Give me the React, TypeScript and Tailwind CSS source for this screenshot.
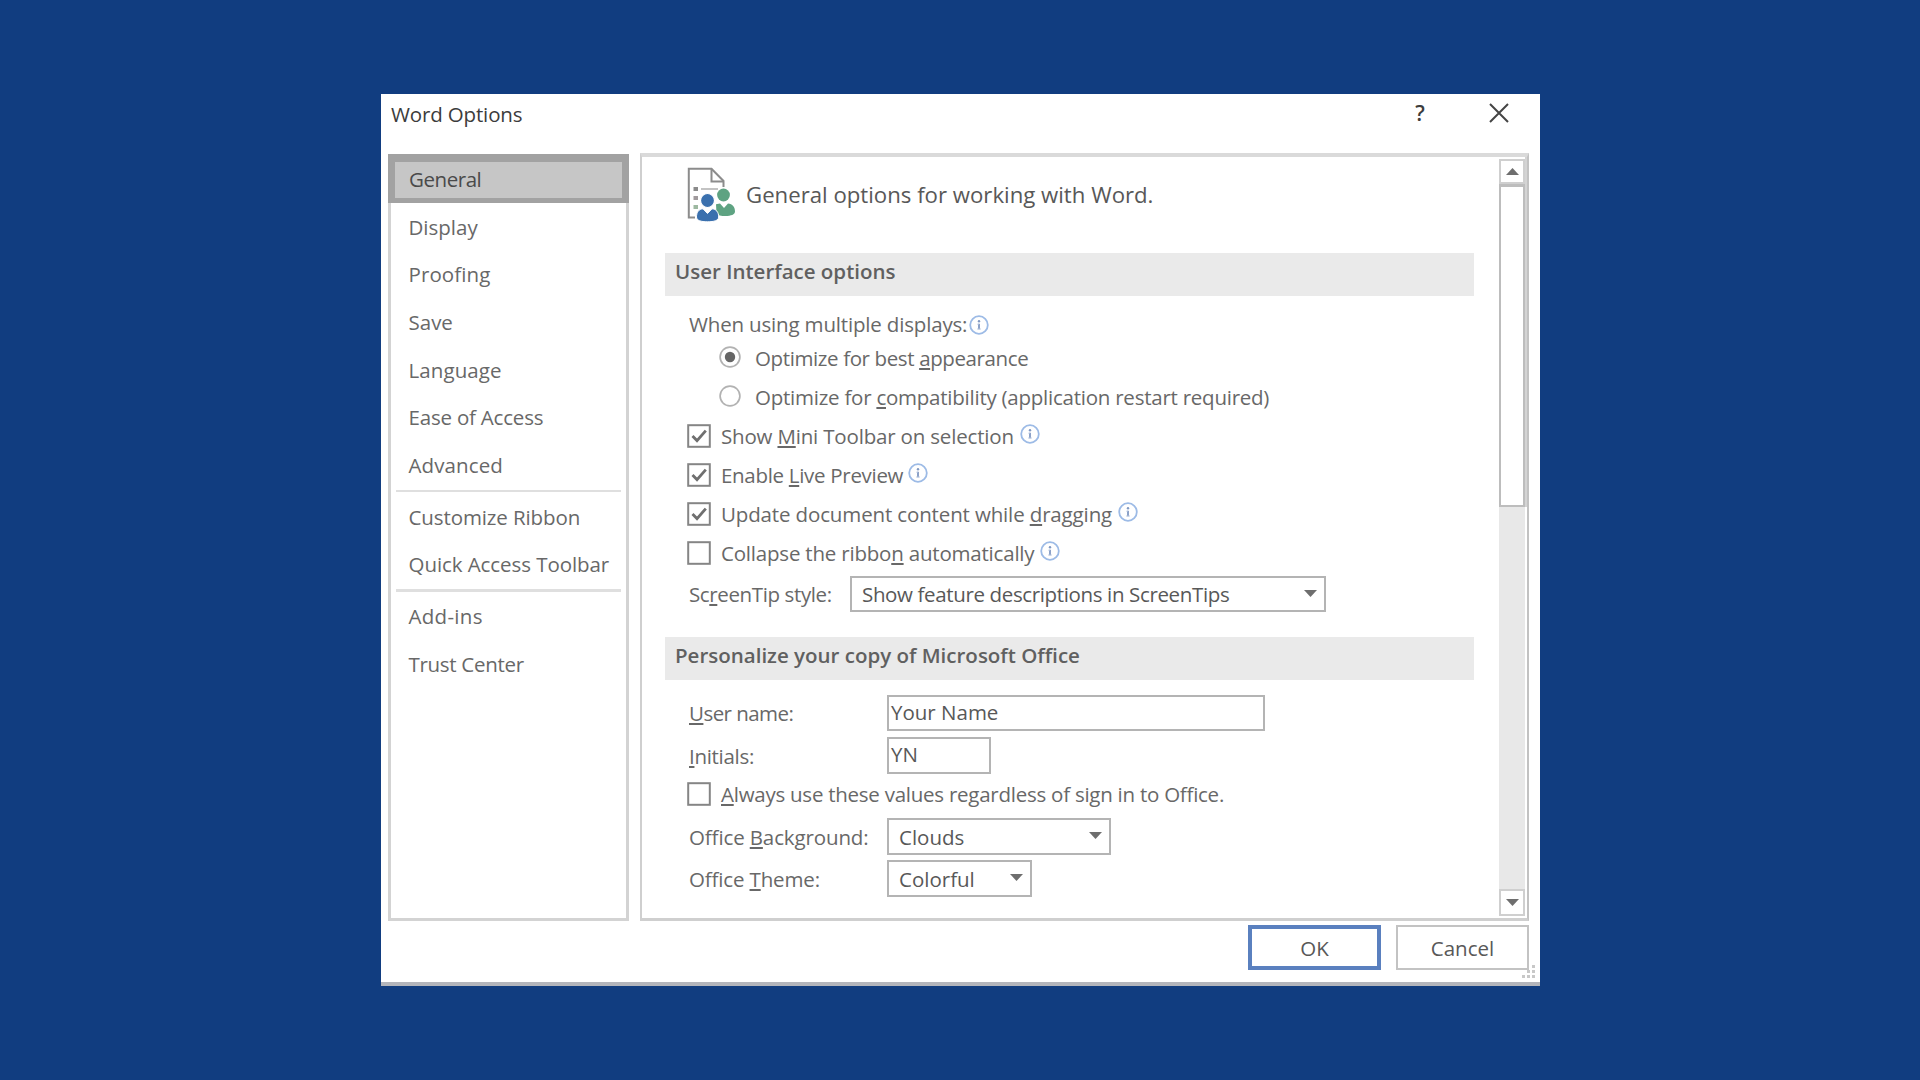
import clsx from 'clsx';

interface NavItem {
  label: string;
  cls?: string;
}

const NAV_GROUPS: NavItem[][] = [
  [
    { label: 'General', cls: 'tracking-[-0.45px]' },
    { label: 'Display' },
    { label: 'Proofing', cls: 'tracking-[0.1px]' },
    { label: 'Save' },
    { label: 'Language', cls: 'tracking-[0.1px]' },
    { label: 'Ease of Access', cls: 'tracking-[-0.2px]' },
    { label: 'Advanced', cls: 'tracking-[0.1px]' },
  ],
  [{ label: 'Customize Ribbon', cls: 'tracking-[-0.1px]' }, { label: 'Quick Access Toolbar', cls: 'tracking-[-0.07px]' }],
  [{ label: 'Add-ins', cls: 'tracking-[0.3px]' }, { label: 'Trust Center', cls: 'tracking-[-0.3px]' }],
];

const CHECKS = [
  { text: 'Show &Mini Toolbar on selection', checked: true, cls: 'tracking-[-0.18px]', gap: 'ml-[6px]' },
  { text: 'Enable &Live Preview', checked: true, cls: 'tracking-[-0.3px]', gap: 'ml-[5px]' },
  { text: 'Update document content while &dragging', checked: true, cls: 'tracking-[-0.14px]', gap: 'ml-[6px]' },
  { text: 'Collapse the ribbo&n automatically', checked: false, cls: 'tracking-[-0.2px]', gap: 'ml-[6px]' },
];

// "&" marks the accelerator key, the letter after it gets underlined
function Label({ text, className }: { text: string; className?: string }) {
  const at = text.indexOf('&');
  return (
    <span className={clsx('whitespace-nowrap', className)}>
      {at < 0 ? text : (
        <>
          {text.slice(0, at)}
          <u className="decoration-[1.5px] underline-offset-[2px]">{text[at + 1]}</u>
          {text.slice(at + 2)}
        </>
      )}
    </span>
  );
}

function Info({ className }: { className?: string }) {
  return (
    <svg viewBox="0 0 20 20" className={clsx('w-5 h-5 shrink-0', className)} fill="none">
      <circle cx="10" cy="10" r="8.8" stroke="#9dbbe6" strokeWidth="1.8" />
      <circle cx="10" cy="6.2" r="1.2" fill="#8098c2" />
      <path d="M10 8.8V14.2" stroke="#8098c2" strokeWidth="1.8" />
      <path d="M8.4 9.2H10M8.2 14H11.8" stroke="#b3c3de" strokeWidth="1" />
    </svg>
  );
}

function Checkbox({ checked }: { checked?: boolean }) {
  return (
    <svg viewBox="0 0 24 24" className="w-6 h-6 shrink-0" fill="none">
      <rect x="1.2" y="1.2" width="21.6" height="21.6" fill="#fff" stroke="#858585" strokeWidth="2" />
      {checked && <path d="M5.5 12L10 16.6L18.8 6.6" stroke="#6f6f6f" strokeWidth="2.8" />}
    </svg>
  );
}

function Radio({ checked }: { checked?: boolean }) {
  return (
    <svg viewBox="0 0 22 22" className="w-[22px] h-[22px] shrink-0 -mt-[2px]" fill="none">
      <circle cx="11" cy="11" r="9.9" fill="#fff" stroke="#b2b2b2" strokeWidth="1.7" />
      {checked && <circle cx="11" cy="11" r="5.2" fill="#666" />}
    </svg>
  );
}

function Arrow({ up, className }: { up?: boolean; className?: string }) {
  return (
    <svg viewBox="0 0 13 7" className={clsx('w-[13px] h-[7px] shrink-0', className)}>
      <path d={up ? 'M0 7L6.5 0L13 7Z' : 'M0 0H13L6.5 7Z'} fill="#6e6e6e" />
    </svg>
  );
}

function Select({ value, className, textCls }: { value: string; className: string; textCls?: string }) {
  return (
    <div className={clsx('flex items-center justify-between border-2 border-[#b4b4b4] bg-white pl-[10px] pr-[7px]', className)}>
      <Label text={value} className={clsx('text-[#585858]', textCls)} />
      <Arrow className="-mt-[2px]" />
    </div>
  );
}

function SectionHeader({ title, className }: { title: string; className?: string }) {
  return (
    <div className={clsx('ml-[22px] mr-[25px] flex h-[43px] items-center bg-[#eaeaea] pl-[10px] pb-[7px] font-semibold text-[#606060]', className)}>
      <Label text={title} />
    </div>
  );
}

function GeneralIcon() {
  return (
    <svg viewBox="0 0 50 56" className="w-[50px] h-14 shrink-0" fill="none">
      <path d="M8 50.5H1.8V1.8H24.5L36.5 14V20" stroke="#8c8c8c" strokeWidth="2" />
      <path d="M24.5 1.8V14.5H36" stroke="#8c8c8c" strokeWidth="2" />
      <path d="M14 22H31" stroke="#b5b5b5" strokeWidth="1.6" />
      <path d="M6.5 20H11V24H6.5Z" fill="#8a8a8a" />
      <path d="M6.5 29H11V33H6.5Z" fill="#a09a9c" />
      <path d="M6.5 38H11V42H6.5Z" fill="#9db8a0" />
      <circle cx="36.5" cy="28" r="6.4" fill="#5ea382" />
      <path d="M29 37.2L33 36.6L37 41L41 36.6C45.5 37 48 40 48 44.5C48 47.5 44 49 38.5 49C34 49 31 48.5 29.5 46.5Z" fill="#5ea382" />
      <circle cx="20.5" cy="33.5" r="7" fill="#3a70ae" stroke="#fff" strokeWidth="1.2" />
      <path d="M9.5 50C9.5 45 12 42 16 41.8L20.5 46.5L25 41.8C29 42 31.7 45 31.7 50C31.7 53.5 27 54.8 20.5 54.8C14 54.8 9.5 53.5 9.5 50Z" fill="#3a70ae" stroke="#fff" strokeWidth="1" />
    </svg>
  );
}

function Sidebar() {
  return (
    <nav className="h-[767px] w-[241px] border-x-[3px] border-b-[3px] border-[#d3d3d3] text-[#686868]">
      {NAV_GROUPS.map((group, g) => (
        <div key={g}>
          {g > 0 && <div className="mx-[5px] mt-[1px] mb-[0.6px] h-[2.6px] bg-[#dfdfdf]" />}
          {group.map(item => {
            const active = item.label === 'General';
            return active ? (
              <div key={item.label} className="-mx-[3px] flex h-[49px] items-center border-x-[7px] border-t-[8px] border-b-[5px] border-[#a2a2a2] bg-[#c6c6c6] pl-[14px] pb-[2px] text-[#4a4a4a]">
                <Label text={item.label} className={item.cls} />
              </div>
            ) : (
              <div key={item.label} className="flex h-[47.6px] items-center pl-[17.5px]">
                <Label text={item.label} className={item.cls} />
              </div>
            );
          })}
        </div>
      ))}
    </nav>
  );
}

function Scrollbar() {
  return (
    <div className="flex w-7 shrink-0">
      <div className="mt-[2px] flex h-[757px] w-[26px] flex-col bg-[#e8e8e8]">
        <div className="flex h-[25px] items-center justify-center border-2 border-[#cfcfcf] bg-white">
          <Arrow up />
        </div>
        <div className="h-[323px] border-2 border-t-[3px] border-[#bdbdbd] bg-white" />
        <div className="flex-1" />
        <div className="flex h-[27px] items-center justify-center border-2 border-[#cfcfcf] bg-white">
          <Arrow />
        </div>
      </div>
      <div className="h-[350px] w-[2px] bg-[#d4d4d4]" />
    </div>
  );
}

function OptionsPane() {
  return (
    <main className="flex h-[768px] w-[889px] border-2 border-t-[4px] border-b-[3px] border-[#cfcfcf] border-t-[#dadada] border-r-[#c2c2c2]">
      <div className="flex-1 pl-[1px]">
        {/* Title */}
        <div className="flex h-24 items-start pl-[44px] pt-[10px]">
          <GeneralIcon />
          <Label text="General options for working with Word." className="ml-[9px] mt-[13px] text-[22.2px] leading-[30px] text-[#585858]" />
        </div>

        <SectionHeader title="User Interface options" />
        <div className="pl-[44px] pt-[14px]">
          <div className="flex h-7 items-center pl-[2px]">
            <Label text="When using multiple displays:" className="tracking-[-0.17px]" />
            <Info className="ml-[2px] mt-[2px]" />
          </div>
          <div className="flex h-[39px] items-center pl-8">
            <Radio checked />
            <Label text="Optimize for best &appearance" className="ml-[14px] tracking-[-0.38px]" />
          </div>
          <div className="flex h-[39px] items-center pl-8">
            <Radio />
            <Label text="Optimize for &compatibility (application restart required)" className="ml-[14px] tracking-[-0.24px]" />
          </div>
          {CHECKS.map(c => (
            <div key={c.text} className="flex h-[39px] items-center">
              <Checkbox checked={c.checked} />
              <Label text={c.text} className={clsx('ml-[10px]', c.cls)} />
              <Info className={clsx('-mt-[3px]', c.gap)} />
            </div>
          ))}
          <div className="mt-1 flex h-9 items-center pl-[2px]">
            <Label text="Sc&reenTip style:" className="w-[161px] tracking-[-0.38px]" />
            <Select value="Show feature descriptions in ScreenTips" className="h-9 w-[476px]" textCls="tracking-[-0.36px]" />
          </div>
        </div>

        <SectionHeader title="Personalize your copy of Microsoft Office" className="mt-[25px]" />
        <div className="pl-[44px] pt-[15px]">
          <div className="flex h-9 items-center pl-[2px]">
            <Label text="&User name:" className="w-[198px] tracking-[-0.55px]" />
            <div className="flex h-9 w-[378px] items-center border-2 border-[#b4b4b4] pl-[2px] pb-[3px] text-[#585858]">Your Name</div>
          </div>
          <div className="mt-[6px] flex h-[37px] items-center pl-[2px]">
            <Label text="&Initials:" className="w-[198px] tracking-[-0.3px]" />
            <div className="flex h-[37px] w-[104px] items-center border-2 border-[#b4b4b4] pl-[2px] pb-[3px] text-[#585858]">YN</div>
          </div>
          <div className="flex h-10 items-center">
            <Checkbox />
            <Label text="&Always use these values regardless of sign in to Office." className="ml-[10px] tracking-[-0.25px]" />
          </div>
          <div className="mt-1 flex h-[37px] items-center pl-[2px]">
            <Label text="Office &Background:" className="w-[198px] tracking-[-0.12px]" />
            <Select value="Clouds" className="h-[37px] w-[224px]" />
          </div>
          <div className="mt-[5px] flex h-[37px] items-center pl-[2px]">
            <Label text="Office &Theme:" className="w-[198px] tracking-[-0.15px]" />
            <Select value="Colorful" className="h-[37px] w-[145px]" />
          </div>
        </div>
      </div>
      <Scrollbar />
    </main>
  );
}

export default function App() {
  return (
    <div className="h-[1080px] w-[1920px] bg-[#113d80] pl-[381px] pt-[94px] font-['Open_Sans','Noto_Sans',sans-serif] text-[20.5px] leading-7 text-[#686868]">
      <div className="relative flex h-[892px] w-[1159px] flex-col border-b-[4px] border-[#b3b5bb] bg-white">
        {/* Title bar */}
        <div className="flex h-[59px] items-start justify-between pl-[10px] pr-[30px] text-[#3c3c3c]">
          <Label text="Word Options" className="mt-[6px] tracking-[-0.15px]" />
          <div className="flex items-start">
            <span className="mt-[5px] w-[14px] text-center text-[21px] font-semibold">?</span>
            <svg viewBox="0 0 22 20" className="ml-[61px] mt-[9px] h-5 w-[22px]" fill="none">
              <path d="M2 1L20 19M20 1L2 19" stroke="#444" strokeWidth="2" />
            </svg>
          </div>
        </div>

        <div className="flex items-start pl-[7px]">
          <div className="pt-[1px]"><Sidebar /></div>
          <div className="ml-[11px]"><OptionsPane /></div>
        </div>

        {/* Buttons */}
        <div className="mt-[4px] flex justify-end gap-[15px] pr-[11px]">
          <button className="h-[45px] w-[133px] border-[4px] border-[#5a80bf] text-[#585858]">OK</button>
          <button className="h-[45px] w-[133px] border-2 border-[#c3c3c3] text-[#585858]">Cancel</button>
        </div>

        {/* Resize grip */}
        <svg viewBox="0 0 16 14" className="absolute bottom-[3px] right-[3px] h-[14px] w-4" fill="#c8c8c8">
          <path d="M11 0h3v3h-3zM6 5h3v3h-3zM11 5h3v3h-3zM1 10h3v3h-3zM6 10h3v3h-3zM11 10h3v3h-3z" />
        </svg>
      </div>
    </div>
  );
}
